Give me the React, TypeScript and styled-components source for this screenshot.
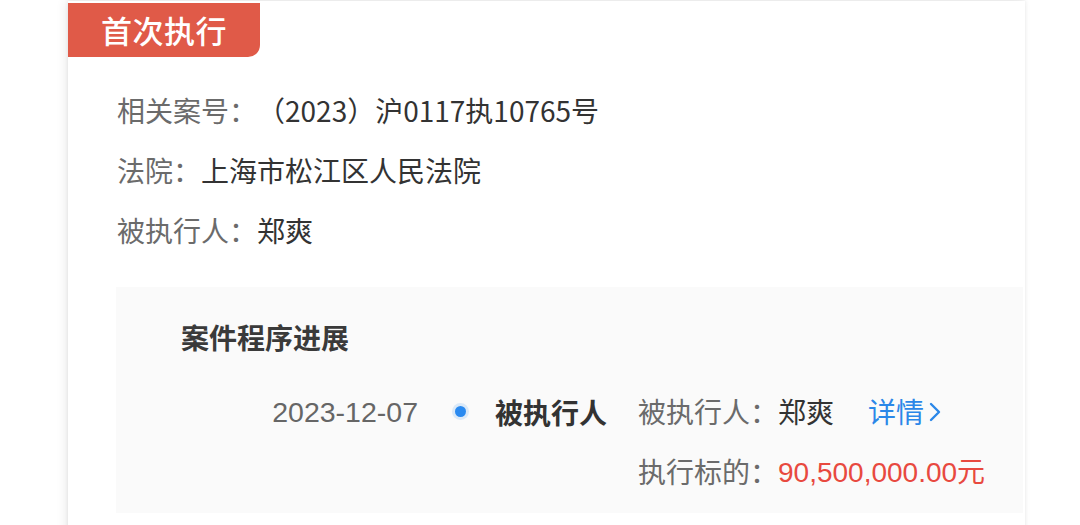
import React from "react";
import styled, { createGlobalStyle } from "styled-components";

const Global = createGlobalStyle`
  html, body { margin: 0; padding: 0; background: #ffffff; }
  body { font-family: "Noto Sans CJK SC", "Noto Sans", sans-serif; }
  #root { height: 525px; overflow: hidden; }
`;

const Page = styled.div`
  height: 525px;
  padding-left: 68px;
  padding-top: 1px;
  box-sizing: border-box;
`;

const Card = styled.div`
  width: 957px;
  height: 600px;
  background: #ffffff;
  box-shadow: -3px 0 10px rgba(0, 0, 0, 0.07), 0 -1px 4px rgba(0, 0, 0, 0.08);
  padding-top: 2px;
  box-sizing: border-box;
`;

const Tag = styled.div`
  width: 192px;
  height: 54px;
  background: #e05a48;
  border-bottom-right-radius: 12px;
  color: #ffffff;
  font-size: 31px;
  font-weight: 500;
  line-height: 54px;
  padding-left: 33px;
  box-sizing: border-box;
  letter-spacing: 0.5px;
`;

const Info = styled.div`
  padding: 23px 0 0 49px;
  display: flex;
  flex-direction: column;
`;

const InfoRow = styled.div`
  height: 60px;
  line-height: 60px;
  font-size: 28px;
  display: flex;
`;

const Label = styled.span`
  color: #6b6b6b;
`;

const Value = styled.span<{ $tone?: "red" | "dark" }>`
  color: ${(p) => (p.$tone === "red" ? "#e8493f" : "#333333")};
`;

const Progress = styled.div`
  margin: 27px 2px 0 48px;
  height: 226px;
  background: #fafafa;
  padding: 30px 0 0 65px;
  box-sizing: border-box;
`;

const ProgressTitle = styled.div`
  font-size: 28px;
  font-weight: 600;
  color: #3a3a3a;
  line-height: 40px;
`;

const Timeline = styled.div`
  margin-top: 25px;
  display: grid;
  grid-template-columns: 237px 77px 143px auto;
  align-items: start;
`;

const DateText = styled.div`
  font-family: "Liberation Sans", "Noto Sans", sans-serif;
  font-size: 28.5px;
  color: #666666;
  text-align: right;
  line-height: 60px;
`;

const DotCell = styled.div`
  height: 60px;
  display: flex;
  align-items: center;
  padding-left: 37px;
`;

const Dot = styled.span`
  width: 11px;
  height: 11px;
  border-radius: 50%;
  background: #2a8af0;
  box-shadow: 0 0 0 3px rgba(42, 138, 240, 0.15);
  margin-top: -2px;
`;

const Event = styled.div`
  font-size: 28px;
  font-weight: 600;
  color: #333333;
  line-height: 60px;
`;

const Details = styled.div`
  display: flex;
  flex-direction: column;
`;

const DetailRow = styled.div`
  font-size: 28px;
  line-height: 59px;
  display: flex;
  align-items: center;
`;

const Amount = styled.span`
  color: #e8493f;
  font-family: "Liberation Sans", "Noto Sans CJK SC", sans-serif;
  font-size: 28px;
`;

const Yuan = styled.span`
  font-family: "Noto Sans CJK SC", sans-serif;
  font-size: 28px;
`;

const Link = styled.a`
  color: #2b87e8;
  margin-left: 34px;
  display: inline-flex;
  align-items: center;
  text-decoration: none;
  gap: 4px;
`;

export default function App() {
  return (
    <>
      <Global />
      <Page>
        <Card>
          <Tag>首次执行</Tag>
          <Info>
            <InfoRow>
              <Label>相关案号：</Label>
              <Value $tone="dark">（2023）沪0117执10765号</Value>
            </InfoRow>
            <InfoRow>
              <Label>法院：</Label>
              <Value $tone="dark">上海市松江区人民法院</Value>
            </InfoRow>
            <InfoRow>
              <Label>被执行人：</Label>
              <Value $tone="dark">郑爽</Value>
            </InfoRow>
          </Info>
          <Progress>
            <ProgressTitle>案件程序进展</ProgressTitle>
            <Timeline>
              <DateText>2023-12-07</DateText>
              <DotCell>
                <Dot />
              </DotCell>
              <Event>被执行人</Event>
              <Details>
                <DetailRow>
                  <Label>被执行人：</Label>
                  <Value $tone="dark">郑爽</Value>
                  <Link>
                    详情
                    <svg width="14" height="22" viewBox="0 0 14 22" fill="none">
                      <path d="M3 3 L11 11 L3 19" stroke="#2b87e8" strokeWidth="2.4" strokeLinecap="round" strokeLinejoin="round" />
                    </svg>
                  </Link>
                </DetailRow>
                <DetailRow>
                  <Label>执行标的：</Label>
                  <Amount>
                    90,500,000.00<Yuan>元</Yuan>
                  </Amount>
                </DetailRow>
              </Details>
            </Timeline>
          </Progress>
        </Card>
      </Page>
    </>
  );
}
